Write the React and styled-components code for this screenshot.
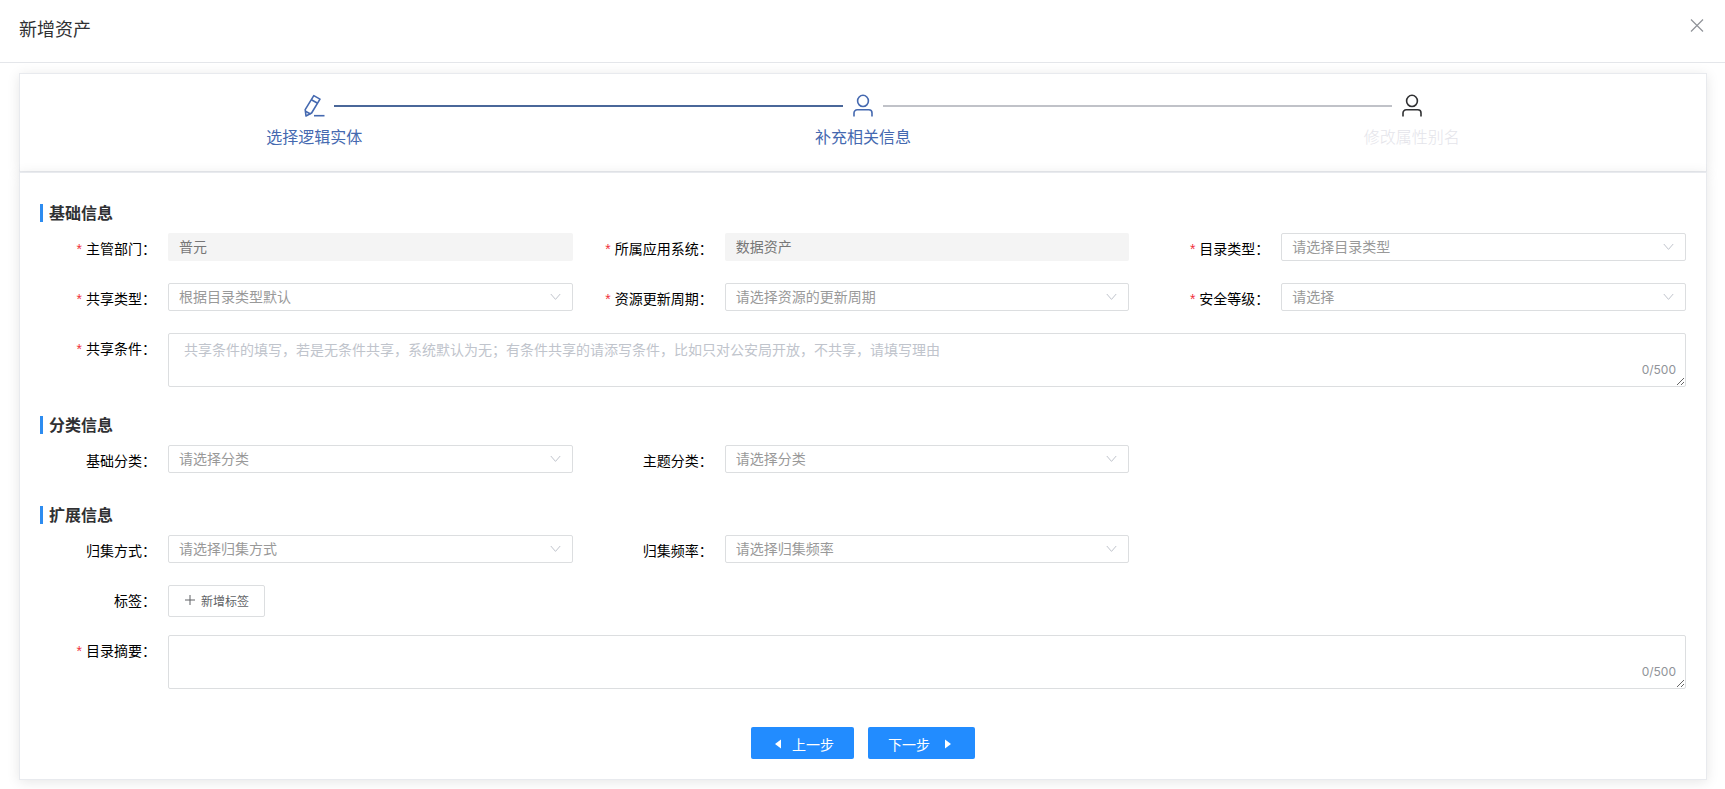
import React, { useId, useState } from "react";
import styled, { createGlobalStyle } from "styled-components";

const GlobalStyle = createGlobalStyle`
  * { box-sizing: border-box; }
  body {
    margin: 0;
    background: #fff;
    color: #303133;
    font-family: "Noto Sans CJK SC", "Liberation Sans", sans-serif;
    font-size: 14px;
  }
  button, input, select, textarea { font-family: inherit; font-size: 14px; margin: 0; }
`;

const Header = styled.header`
  display: flex;
  justify-content: space-between;
  align-items: flex-start;
  height: 63px;
  padding: 15px 20px 0 19px;
  border-bottom: 1px solid #e4e6ea;
`;

const Title = styled.h1`
  margin: 0;
  font-size: 18px;
  font-weight: 400;
  line-height: 26px;
`;

const CloseButton = styled.button`
  display: flex;
  padding: 3px 0;
  border: 0;
  background: none;
  color: #909399;
  cursor: pointer;
`;

const Main = styled.main`
  padding: 10px 18px 10px 19px;
`;

const Card = styled.section`
  padding: ${(p) => p.$padding};
  border: 1px solid #e8eaee;
  background: #fff;
  box-shadow: 0 2px 12px rgba(0, 0, 0, 0.1);
`;

const Steps = styled.ol`
  display: grid;
  grid-template-columns: repeat(3, 1fr);
  margin: 0;
  padding: 0;
  list-style: none;
`;

const Step = styled.li`
  text-align: center;
  color: ${(p) => (p.$reached ? "#4569b0" : "#303133")};
`;

const StepHead = styled.div`
  display: grid;
  grid-template-columns: 1fr 24px 1fr;
  align-items: center;
  column-gap: 8px;
`;

const StepLine = styled.span`
  grid-column: ${(p) => (p.$side === "left" ? 1 : 3)};
  grid-row: 1;
  height: 2px;
  background: ${(p) => (p.$done ? "#4a6799" : "#c0c2c8")};
`;

const StepIcon = styled.span`
  display: flex;
  grid-column: 2;
  grid-row: 1;
`;

const StepLabel = styled.div`
  margin-top: 6px;
  font-size: 16px;
  line-height: 24px;
  color: ${(p) => (p.$reached ? "inherit" : "#e4e4ea")};
  font-weight: ${(p) => (p.$reached ? 400 : 300)};
`;

const SectionTitle = styled.h2`
  display: flex;
  align-items: center;
  height: 18px;
  margin: 11px 0;
  padding: 0 0 3px 6px;
  border-left: 3px solid #2d8cf0;
  font-size: 16px;
  font-weight: 700;
`;

const Fields = styled.div`
  display: grid;
  grid-template-columns: repeat(3, minmax(0, 1fr));
  gap: 18px 24px;
  margin-bottom: 29px;
`;

const Field = styled.div`
  display: flex;
  align-items: flex-start;
  min-height: 32px;
  grid-column: ${(p) => (p.$wide ? "1 / -1" : "auto")};
`;

const Label = styled.label`
  display: flex;
  flex: 0 0 128px;
  justify-content: flex-end;
  padding-right: 12px;
  color: #000;
  line-height: 30px;
  white-space: nowrap;
`;

const Star = styled.span`
  margin-right: 4px;
  color: #f0303c;
  font-family: "Liberation Sans", sans-serif;
  line-height: 32px;
`;

const Control = styled.div`
  display: flex;
  position: relative;
  flex: 1;
  min-width: 0;
`;

const TextInput = styled.input`
  width: 100%;
  height: 28px;
  padding: 0 11px 2px;
  border: 0;
  border-radius: 2px;
  background: #f4f4f4;
  color: #777;
`;

const SelectBox = styled.select`
  width: 100%;
  height: 28px;
  padding: 0 30px 3px 10px;
  border: 1px solid #dcdee0;
  border-radius: 2px;
  background: #fff;
  color: #999;
  appearance: none;
`;

const Chevron = styled.svg`
  position: absolute;
  top: 10px;
  right: 12px;
  pointer-events: none;
`;

const TextArea = styled.textarea`
  display: block;
  width: 100%;
  height: 54px;
  padding: 5px 15px;
  border: 1px solid #dcdee0;
  border-radius: 2px;
  background: #fff;
  color: #606266;
  line-height: 21px;
  resize: vertical;
  &::placeholder { color: #c0c4cc; }
`;

const Counter = styled.span`
  position: absolute;
  right: 10px;
  bottom: 8px;
  color: #909399;
  font-family: Inter, sans-serif;
  font-size: 12px;
  line-height: 18px;
`;

const TagButton = styled.button`
  display: flex;
  align-items: center;
  gap: 5px;
  height: 32px;
  padding: 0 15px 2px;
  border: 1px solid #dcdee0;
  border-radius: 2px;
  background: #fff;
  color: #606266;
  font-size: 12px;
  cursor: pointer;
`;

const Actions = styled.div`
  display: flex;
  justify-content: center;
  gap: 14px;
  margin-top: 38px;
`;

const PrimaryButton = styled.button`
  display: flex;
  align-items: center;
  gap: ${(p) => p.$gap};
  height: 32px;
  padding: 2px 20px 0;
  border: 0;
  border-radius: 2px;
  background: #228cff;
  color: #fff;
  cursor: pointer;
`;

function EditIcon() {
  return (
    <svg width="24" height="24" viewBox="0 0 24 24" fill="none" stroke="currentColor" strokeWidth="1.6" strokeLinejoin="round">
      <path d="M11.8 1.6 18 5.1 9.6 19 4 22 3.2 15.6Z" />
      <path d="M9.4 5.7 15.6 9.2M3.4 17.3 8.6 20" />
      <path d="M12 21.7H22.5" />
    </svg>
  );
}

function UserIcon() {
  return (
    <svg width="24" height="24" viewBox="0 0 24 24" fill="none" stroke="currentColor" strokeWidth="1.6">
      <ellipse cx="12" cy="6.9" rx="5.4" ry="5.6" />
      <path d="M3 22.4V19a3.2 3.2 0 0 1 3.2-3.2h11.6A3.2 3.2 0 0 1 21 19v3.4" />
    </svg>
  );
}

function FieldLabel({ id, required, children }) {
  return (
    <Label htmlFor={id}>
      {required && <Star aria-hidden="true">*</Star>}
      {children}：
    </Label>
  );
}

function ReadOnlyField({ label, value }) {
  const id = useId();
  return (
    <Field>
      <FieldLabel id={id} required>{label}</FieldLabel>
      <Control><TextInput id={id} value={value} readOnly /></Control>
    </Field>
  );
}

function SelectField({ label, required, placeholder }) {
  const id = useId();
  return (
    <Field>
      <FieldLabel id={id} required={required}>{label}</FieldLabel>
      <Control>
        <SelectBox id={id} defaultValue="">
          <option value="">{placeholder}</option>
        </SelectBox>
        <Chevron width="11" height="8" viewBox="0 0 11 8" fill="none" stroke="#c0c4cc">
          <path d="M0.8 1 5.5 6.4 10.2 1" />
        </Chevron>
      </Control>
    </Field>
  );
}

function TextAreaField({ label, placeholder }) {
  const id = useId();
  const [text, setText] = useState("");
  return (
    <Field $wide>
      <FieldLabel id={id} required>{label}</FieldLabel>
      <Control>
        <TextArea id={id} maxLength={500} placeholder={placeholder} value={text} onChange={(e) => setText(e.target.value)} />
        <Counter>{text.length}/500</Counter>
      </Control>
    </Field>
  );
}

const steps = [
  { label: "选择逻辑实体", icon: <EditIcon />, reached: true },
  { label: "补充相关信息", icon: <UserIcon />, reached: true },
  { label: "修改属性别名", icon: <UserIcon />, reached: false },
];

export default function App() {
  return (
    <>
      <GlobalStyle />
      <Header>
        <Title>新增资产</Title>
        <CloseButton type="button" aria-label="关闭">
          <svg width="16" height="16" viewBox="0 0 16 16" fill="none" stroke="currentColor" strokeWidth="1.2">
            <path d="M2 1.5 14 13.5M14 1.5 2 13.5" />
          </svg>
        </CloseButton>
      </Header>
      <Main>
        <Card $padding="20px 20px 23px">
          <Steps>
            {steps.map((step, i) => (
              <Step key={step.label} $reached={step.reached}>
                <StepHead>
                  {i > 0 && <StepLine $side="left" $done={step.reached} />}
                  <StepIcon>{step.icon}</StepIcon>
                  {i < steps.length - 1 && <StepLine $side="right" $done={steps[i + 1].reached} />}
                </StepHead>
                <StepLabel $reached={step.reached}>{step.label}</StepLabel>
              </Step>
            ))}
          </Steps>
        </Card>
        <Card as="form" $padding="20px">
          <SectionTitle>基础信息</SectionTitle>
          <Fields>
            <ReadOnlyField label="主管部门" value="普元" />
            <ReadOnlyField label="所属应用系统" value="数据资产" />
            <SelectField label="目录类型" required placeholder="请选择目录类型" />
            <SelectField label="共享类型" required placeholder="根据目录类型默认" />
            <SelectField label="资源更新周期" required placeholder="请选择资源的更新周期" />
            <SelectField label="安全等级" required placeholder="请选择" />
            <TextAreaField
              label="共享条件"
              placeholder="共享条件的填写，若是无条件共享，系统默认为无；有条件共享的请添写条件，比如只对公安局开放，不共享，请填写理由"
            />
          </Fields>
          <SectionTitle>分类信息</SectionTitle>
          <Fields>
            <SelectField label="基础分类" placeholder="请选择分类" />
            <SelectField label="主题分类" placeholder="请选择分类" />
          </Fields>
          <SectionTitle>扩展信息</SectionTitle>
          <Fields>
            <SelectField label="归集方式" placeholder="请选择归集方式" />
            <SelectField label="归集频率" placeholder="请选择归集频率" />
            <Field $wide>
              <FieldLabel id="add-tag">标签</FieldLabel>
              <TagButton id="add-tag" type="button">
                <svg width="12" height="12" viewBox="0 0 12 12" fill="none" stroke="currentColor">
                  <path d="M1 6H11M6 1V11" />
                </svg>
                新增标签
              </TagButton>
            </Field>
            <TextAreaField label="目录摘要" />
          </Fields>
          <Actions>
            <PrimaryButton type="button" $gap="7px">
              <svg width="14" height="14" viewBox="0 0 14 14" fill="currentColor"><path d="M10 2.5V11.5L4 7Z" /></svg>
              上一步
            </PrimaryButton>
            <PrimaryButton type="button" $gap="11px">
              下一步
              <svg width="14" height="14" viewBox="0 0 14 14" fill="currentColor"><path d="M4 2.5V11.5L10 7Z" /></svg>
            </PrimaryButton>
          </Actions>
        </Card>
      </Main>
    </>
  );
}
